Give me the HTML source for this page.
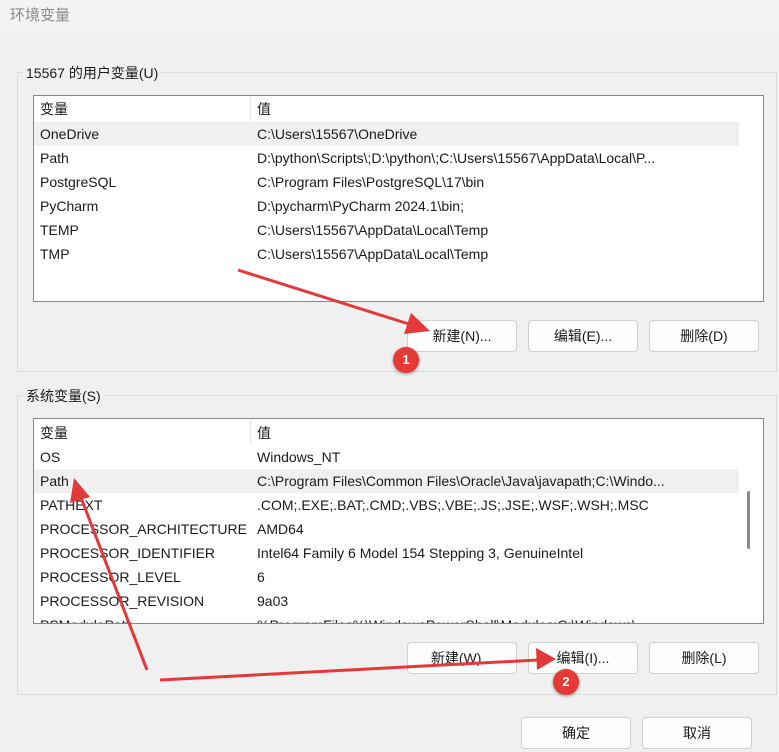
<!DOCTYPE html>
<html><head><meta charset="utf-8"><style>
*{box-sizing:border-box;margin:0;padding:0}
body{width:779px;height:752px;background:#f0f0f0;font-family:"Liberation Sans","Microsoft YaHei","Noto Sans CJK SC",sans-serif;font-size:14px;color:#1a1a1a;position:relative;overflow:hidden}
.abs{position:absolute}
.title{left:0;top:0;width:779px;height:31px;background:#f3f3f3;color:#8a8a8a;font-size:15px;padding:4px 10px}
.grp{border:1px solid #dcdcdc}
.lbl{background:#f0f0f0;padding:0 3px;font-size:14px}
.list{background:#fff;border:1px solid #828790;overflow:hidden}
.row{position:absolute;left:0;height:24px;line-height:24px;white-space:nowrap}
.row span{position:absolute}
.btn{background:#fdfdfd;border:1px solid #d0d0d0;border-radius:4px;text-align:center;line-height:30px;font-size:14px}
.badge{width:26px;height:26px;border-radius:50%;background:#e53935;color:#fff;font-weight:bold;font-size:13px;text-align:center;line-height:26px;box-shadow:0 1px 3px rgba(0,0,0,.4)}
</style></head><body>
<div class="abs title">环境变量</div>

<div class="abs grp" style="left:17px;top:72px;width:760px;height:300px"></div>
<div class="abs lbl" style="left:23px;top:63px">15567 的用户变量(U)</div>
<div class="abs list" style="left:33px;top:95px;width:731px;height:207px">
 <div class="row" style="top:1px;width:730px"><span style="left:6px">变量</span><span style="left:223px">值</span></div>
 <div class="abs" style="left:216px;top:0;width:1px;height:25px;background:#e5e5e5"></div>
 <div class="row" style="top:26px;width:705px;background:#f0f0f0"><span style="left:6px">OneDrive</span><span style="left:223px">C:\Users\15567\OneDrive</span></div>
 <div class="row" style="top:50px"><span style="left:6px">Path</span><span style="left:223px">D:\python\Scripts\;D:\python\;C:\Users\15567\AppData\Local\P...</span></div>
 <div class="row" style="top:74px"><span style="left:6px">PostgreSQL</span><span style="left:223px">C:\Program Files\PostgreSQL\17\bin</span></div>
 <div class="row" style="top:98px"><span style="left:6px">PyCharm</span><span style="left:223px">D:\pycharm\PyCharm 2024.1\bin;</span></div>
 <div class="row" style="top:122px"><span style="left:6px">TEMP</span><span style="left:223px">C:\Users\15567\AppData\Local\Temp</span></div>
 <div class="row" style="top:146px"><span style="left:6px">TMP</span><span style="left:223px">C:\Users\15567\AppData\Local\Temp</span></div>
</div>
<div class="abs btn" style="left:407px;top:320px;width:110px;height:32px">新建(N)...</div>
<div class="abs btn" style="left:528px;top:320px;width:110px;height:32px">编辑(E)...</div>
<div class="abs btn" style="left:649px;top:320px;width:110px;height:32px">删除(D)</div>

<div class="abs grp" style="left:17px;top:395px;width:760px;height:300px"></div>
<div class="abs lbl" style="left:23px;top:386px">系统变量(S)</div>
<div class="abs list" style="left:33px;top:418px;width:731px;height:206px">
 <div class="row" style="top:2px"><span style="left:6px">变量</span><span style="left:223px">值</span></div>
 <div class="abs" style="left:216px;top:0;width:1px;height:25px;background:#e5e5e5"></div>
 <div class="row" style="top:26px"><span style="left:6px">OS</span><span style="left:223px">Windows_NT</span></div>
 <div class="row" style="top:50px;width:705px;background:#f0f0f0"><span style="left:6px">Path</span><span style="left:223px">C:\Program Files\Common Files\Oracle\Java\javapath;C:\Windo...</span></div>
 <div class="row" style="top:74px"><span style="left:6px">PATHEXT</span><span style="left:223px">.COM;.EXE;.BAT;.CMD;.VBS;.VBE;.JS;.JSE;.WSF;.WSH;.MSC</span></div>
 <div class="row" style="top:98px"><span style="left:6px">PROCESSOR_ARCHITECTURE</span><span style="left:223px">AMD64</span></div>
 <div class="row" style="top:122px"><span style="left:6px">PROCESSOR_IDENTIFIER</span><span style="left:223px">Intel64 Family 6 Model 154 Stepping 3, GenuineIntel</span></div>
 <div class="row" style="top:146px"><span style="left:6px">PROCESSOR_LEVEL</span><span style="left:223px">6</span></div>
 <div class="row" style="top:170px"><span style="left:6px">PROCESSOR_REVISION</span><span style="left:223px">9a03</span></div>
 <div class="row" style="top:194px"><span style="left:6px">PSModulePath</span><span style="left:223px">%ProgramFiles%\WindowsPowerShell\Modules;C:\Windows\...</span></div>
 <div class="abs" style="left:713px;top:72px;width:3px;height:58px;background:#8a8a8a;border-radius:2px"></div>
</div>
<div class="abs btn" style="left:407px;top:642px;width:110px;height:32px">新建(W)...</div>
<div class="abs btn" style="left:528px;top:642px;width:110px;height:32px">编辑(I)...</div>
<div class="abs btn" style="left:649px;top:642px;width:110px;height:32px">删除(L)</div>

<div class="abs btn" style="left:521px;top:717px;width:110px;height:32px">确定</div>
<div class="abs btn" style="left:642px;top:717px;width:110px;height:32px">取消</div>

<svg class="abs" style="left:0;top:0" width="779" height="752">
 <g stroke="#e23a3a" stroke-width="3" fill="#e23a3a">
  <line x1="238" y1="270" x2="412" y2="325"/>
  <polygon points="430,331 404,334 411,313" stroke="none"/>
  <line x1="160" y1="680" x2="538" y2="660"/>
  <polygon points="556,659 537,670 536,648" stroke="none"/>
  <line x1="147" y1="670" x2="80" y2="495"/>
  <polygon points="74,478 90,497 70,503" stroke="none"/>
 </g>
</svg>
<div class="abs badge" style="left:393px;top:347px">1</div>
<div class="abs badge" style="left:553px;top:669px">2</div>
</body></html>
